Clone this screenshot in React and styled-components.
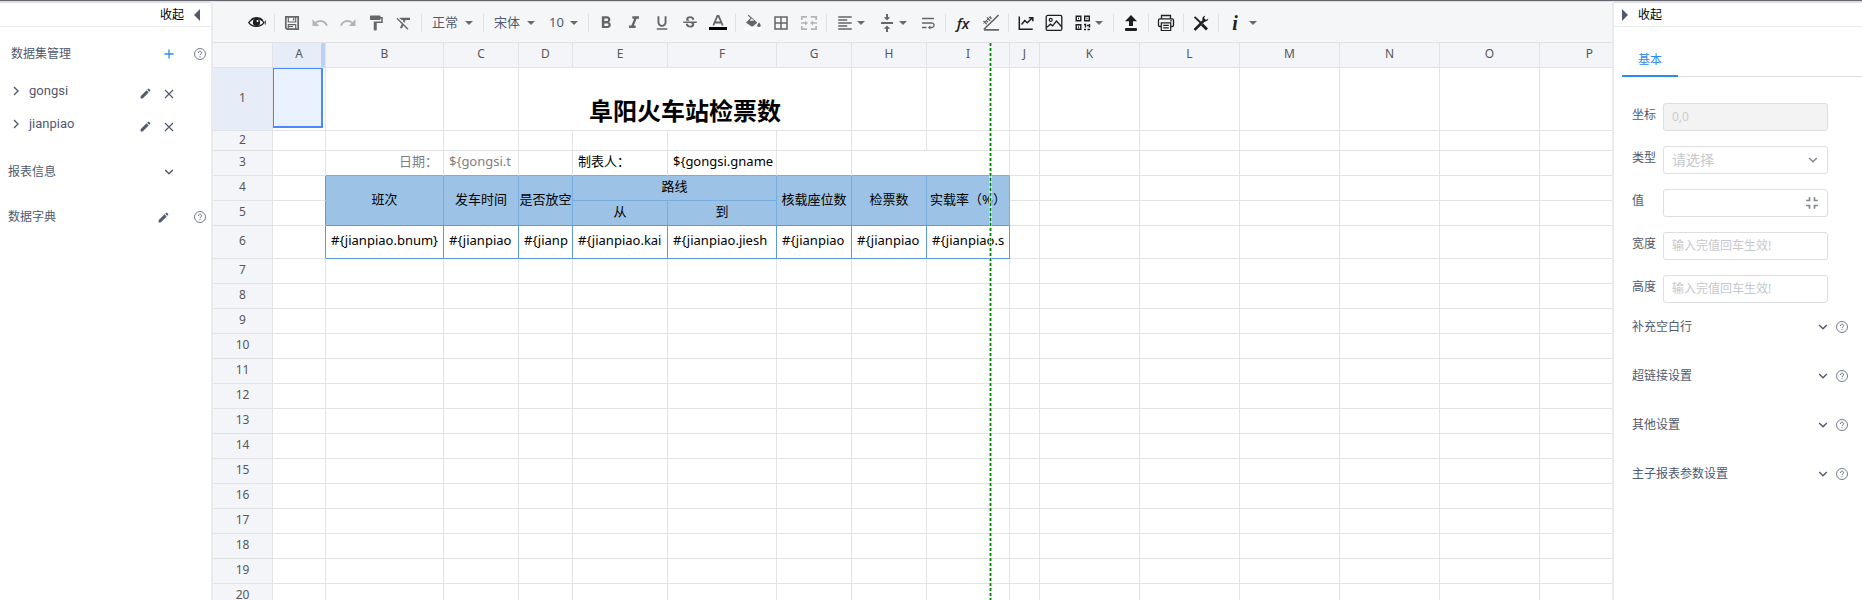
import React from 'react'
import styled, { createGlobalStyle, css } from 'styled-components'
import {
  MdUndo,
  MdRedo,
  MdFormatPaint,
  MdFormatClear,
  MdFormatBold,
  MdFormatItalic,
  MdFormatUnderlined,
  MdStrikethroughS,
  MdFormatAlignLeft,
  MdWrapText,
  MdBorderAll,
  MdEdit,
  MdFullscreenExit
} from 'react-icons/md'

const GlobalStyle = createGlobalStyle`
  * {
    box-sizing: border-box;
  }

  body {
    margin: 0;
    background: #fff;
    color: #515a6e;
    font: 12px/18px "Noto Sans", "Noto Sans CJK SC", sans-serif;
  }

  button,
  input,
  select {
    font: inherit;
    color: inherit;
  }
`

const Page = styled.div`
  display: flex;
  height: 100vh;
  overflow: hidden;
  border-top: 1px solid #66656b;
`

const PlainButton = styled.button`
  display: flex;
  align-items: center;
  justify-content: center;
  padding: 0;
  border: 0;
  background: none;
  cursor: pointer;
`

/* ---------- icons ---------- */

const Svg = ({size = 18, box = 18, children, ...rest}) => (
  <svg
    width={size}
    height={size}
    viewBox={`0 0 ${box} ${box}`}
    fill='none'
    stroke='currentColor'
    aria-hidden='true'
    {...rest}
  >
    {children}
  </svg>
)

const ChevronIcon = (props) => (
  <Svg size={10} box={10} strokeWidth='1.4' {...props}>
    <path d='M1.2 3 5 6.8 8.8 3' />
  </Svg>
)

const ChevronRightIcon = () => (
  <Svg size={10} box={10} strokeWidth='1.4'>
    <path d='M3 1 7 5 3 9' />
  </Svg>
)

const CrossIcon = () => (
  <Svg size={10} box={10} strokeWidth='1.2'>
    <path d='M1 1l8 8M9 1 1 9' />
  </Svg>
)

const PlusIcon = () => (
  <Svg size={10} box={10} strokeWidth='1.3'>
    <path d='M5 .5v9M.5 5h9' />
  </Svg>
)

const HelpIcon = () => (
  <Svg size={12} box={12} strokeWidth='.8'>
    <circle cx='6' cy='6' r='5.5' />
    <path d='M4.4 4.9C4.4 2.7 7.6 2.800 7.600 4.700 7.600 5.900 6 5.900 6 7.200M6 8.200v1' strokeWidth='.9' />
  </Svg>
)

const EyeIcon = () => (
  <Svg>
    <path d='M.8 8.600C4 3.400 12.500 3 16 8.600 12.500 13.400 4.500 13.600.8 8.600Z' strokeWidth='1.3' />
    <path d='M3 5.700C6 3 12 3 14.500 6' strokeWidth='1.4' />
    <circle cx='8.5' cy='8.4' r='3.6' fill='currentColor' stroke='none' />
    <circle cx='9.5' cy='7' r='1' fill='#fff' stroke='none' />
    <path d='M17.300 6.500v4' strokeWidth='.9' />
  </Svg>
)

const SaveIcon = () => (
  <Svg>
    <path d='M2.800 2.800h12.400v12.400H4.200l-1.400-1.400Z' strokeWidth='1.7' />
    <path d='M5.300 3v5h7.400V3M5.300 15v-4.300h7.400V15M10.600 4v2.500' strokeWidth='1.2' />
    <path d='M6 12.500h4' strokeWidth='1.2' />
  </Svg>
)

const TextColorIcon = () => (
  <Svg>
    <path d='M4.300 11.500 8.400 1.800h1.200l4.100 9.700M5.800 8.500h6.400' strokeWidth='1.8' />
    <path d='M0 14.500h18' stroke='#000' strokeWidth='3' />
  </Svg>
)

const FillColorIcon = () => (
  <Svg>
    <path d='M0 14.500h18' stroke='#fff' strokeWidth='3' />
    <path d='M4.500.8 12.800 8a.8.8 0 0 1 0 1.100L9 12.300c-.5.400-1.200.4-1.700 0L2.500 9a.8.8 0 0 1 0-1.100L6.600 4 3.700 1.500Z' fill='currentColor' stroke='none' />
    <path d='M5.600 6.800h4.600L7.700 4.600Z' fill='#f5f6f7' stroke='none' />
    <path d='M15 8.500s-1.700 1.900-1.700 2.900a1.700 1.700 0 0 0 3.400 0c0-1-1.700-2.900-1.700-2.900Z' fill='currentColor' stroke='none' />
  </Svg>
)

const MergeIcon = () => (
  <Svg>
    <path d='M1.800 6V2.800H7M10.800 2.800h5.400V6M1.800 12v3.200H7M10.800 15.200h5.400V12' strokeWidth='1.7' />
    <path d='M1 9h4.500M12.500 9H17' strokeWidth='1.6' />
    <path d='M5 6.500 8 9l-3 2.500ZM13 6.500 10 9l3 2.500Z' fill='currentColor' stroke='none' />
  </Svg>
)

const VerticalIcon = () => (
  <Svg>
    <path d='M3 9h12' strokeWidth='2' />
    <path d='M9 0v4M9 18v-4' strokeWidth='2' />
    <path d='M5.800 3.300h6.400L9 6.600ZM5.800 14.700h6.400L9 11.400Z' fill='currentColor' stroke='none' />
  </Svg>
)

const RulerIcon = () => (
  <Svg>
    <path d='M2 15.800h15M1.800 15.500 16.600 1' strokeWidth='1.7' />
    <path d='M1.500 9.500 8.700 2.300' strokeWidth='1' />
    <path d='m1.500 7 3.200 3.200M4 6.300l2 2M5 3.600l3.200 3.200M7.500 2.800l2 2' strokeWidth='1.4' />
  </Svg>
)

const ChartIcon = () => (
  <Svg>
    <path d='M2.300 2.500v12.700h13.400' strokeWidth='1.5' />
    <path d='m4.500 10.500 3.300-4 2.500 2.300 4.700-4.500M11.800 3.800h4v3.500' strokeWidth='1.5' />
  </Svg>
)

const ImageIcon = () => (
  <Svg>
    <rect x='1.2' y='1.4' width='15.6' height='15' rx='1.5' strokeWidth='1.3' />
    <circle cx='5.7' cy='5.9' r='1.5' strokeWidth='1.2' />
    <path d='m1.500 13.500 4-3.300 2 1.600 4-4.800 5.300 6' strokeWidth='1.3' />
  </Svg>
)

const QrIcon = () => (
  <Svg>
    <path d='M2.200 2.200h4.600v4.600H2.200ZM10.700 2.200h4.600v4.600h-4.600ZM2.200 10.700h4.600v4.600H2.200Z' strokeWidth='1.4' />
    <path d='M4 4.500h1M12.500 4.500h1M4 13h1M10 10.500h1.500v3M13 11.500h3.200M15.500 10v3.500M10 15.500h2M13.500 15.500h2.500' strokeWidth='1.4' />
  </Svg>
)

const UploadIcon = () => (
  <Svg>
    <path d='M9 1 15 7.200h-4V12H7V7.200H3Z' fill='currentColor' stroke='none' />
    <rect x='3' y='14' width='12' height='3' rx='1' fill='currentColor' stroke='none' />
  </Svg>
)

const PrintIcon = () => (
  <Svg>
    <path d='M4.500 4.800v-3.300h9v3.300M4 12.500H2.800a1.300 1.300 0 0 1-1.300-1.300v-5a1.300 1.300 0 0 1 1.300-1.300h12.400a1.300 1.300 0 0 1 1.300 1.300v5a1.300 1.300 0 0 1-1.300 1.300H14' strokeWidth='1.3' />
    <path d='M4.300 8.800h9.400v7.700H4.300ZM6.200 11.300h5.600M6.200 13.800h5.600M13.200 6.800h1.600' strokeWidth='1.2' />
  </Svg>
)

const ToolsIcon = () => (
  <Svg>
    <path d='M2.500 2.800 9 9' strokeWidth='1.8' />
    <path d='m10 10.500 5 5' strokeWidth='3' />
    <path d='M2.500 16 12.500 6' strokeWidth='2.5' />
    <path d='M13.300 1.800c-3 .5-3.500 3-2.300 5.200 2.300 1.200 5 .3 5.300-2.500L14 6l-2-2Z' fill='currentColor' stroke='none' />
  </Svg>
)

const Caret = styled.span`
  width: 0;
  height: 0;
  border: 4px solid transparent;
  border-top-color: #6a6a6a;
  border-bottom: 0;
`

/* ---------- side panels ---------- */

const Side = styled.aside`
  display: flex;
  flex-direction: column;
  flex: none;
  width: ${({$width}) => $width}px;
  border-top: 2px solid #dcdee8;
`

const SideHead = styled.button`
  display: flex;
  align-items: center;
  gap: 10px;
  flex: none;
  height: 24px;
  padding: 0 11px 0 8px;
  border: 0;
  border-bottom: 1px solid #e8eaec;
  background: #fff;
  color: #000;
  justify-content: ${({$end}) => ($end ? 'flex-end' : 'flex-start')};
`

const Triangle = styled.span`
  width: 0;
  height: 0;
  border: 6px solid transparent;
  border-${({$to}) => ($to === 'left' ? 'right' : 'left')}-color: #515a6e;
  border-${({$to}) => $to}: 0;
`

const DataPanel = styled.div`
  display: flex;
  flex-direction: column;
  padding: 14px 5px 0 8px;
`

const DataRow = styled.div`
  display: grid;
  grid-template-columns: 1fr 24px 24px 25px;
  align-items: center;
  height: ${({$height}) => $height}px;
  padding-left: ${({$indent}) => $indent || 0}px;
`

const DataSets = styled.div`
  padding: 7px 0 1px;
`

const DataName = styled.button`
  display: flex;
  align-items: center;
  gap: 8px;
  padding: 0;
  border: 0;
  background: none;
  font: 13px/18px Roboto, sans-serif;
`

const IconButton = styled(PlainButton)`
  height: 18px;
  grid-column: ${({$column}) => $column || 'auto'};
  justify-content: ${({$align}) => $align || 'center'};
  color: ${({$color}) => $color || '#515a6e'};

  ${DataSets} & {
    height: 24px;
    padding-top: 6px;
  }
`

/* ---------- toolbar ---------- */

const Main = styled.main`
  flex: 1;
  min-width: 0;
  display: flex;
  flex-direction: column;
  overflow: hidden;
  border: solid #ebebed;
  border-width: 0 2px;
`

const Toolbar = styled.div`
  display: flex;
  align-items: center;
  flex: none;
  height: 42px;
  padding: 2px 0 0 30px;
  border-top: 1px solid #dcdee0;
  border-bottom: 1px solid #e0e2e4;
  background: #f5f6f7;
`

const Tool = styled(PlainButton)`
  flex: none;
  width: ${({$menu}) => ($menu ? 40 : 26)}px;
  height: 26px;
  margin: 0 1px;
  gap: ${({$wide}) => ($wide ? 11 : 3)}px;
  padding-right: ${({$menu, $wide}) => ($menu && !$wide ? 2 : 0)}px;
  padding-left: ${({$wide}) => ($wide ? 3 : 0)}px;
  color: ${({$dark}) => ($dark ? '#1f1f1f' : '#666')};
  opacity: ${({disabled}) => (disabled ? 0.45 : 1)};
`

const Divider = styled.span`
  flex: none;
  width: 1px;
  height: 18px;
  margin: 0 3px;
  background: #dfe0e2;
`

const Picker = styled.label`
  display: grid;
  align-items: center;
  flex: none;
  width: ${({$width}) => $width}px;

  > * {
    grid-area: 1 / 1;
  }

  ${Caret} {
    justify-self: end;
    margin-right: 7px;
    pointer-events: none;
  }
`

const PickerSelect = styled.select`
  width: 100%;
  height: 26px;
  padding: 0 0 2px 7px;
  border: 0;
  appearance: none;
  background: none;
  color: #515a6e;
  font-size: 13px;
`

const Formula = styled.em`
  font: italic 600 15px/18px "Open Sans", sans-serif;
`

const Info = styled.em`
  font: italic bold 20px/20px "Liberation Serif", serif;
`

/* ---------- sheet ---------- */

const SheetArea = styled.div`
  position: relative;
  flex: 1;
  overflow: hidden;
`

const Sheet = styled.table`
  table-layout: fixed;
  border-collapse: separate;
  border-spacing: 0;
  color: #000;
  font-size: 13px;
  line-height: 18px;
`

const lines = css`
  border-right: 1px solid ${({$right}) => $right || '#e2e3e5'};
  border-bottom: 1px solid ${({$bottom}) => $bottom || '#e2e3e5'};
`

const Head = styled.th`
  ${lines}
  padding: 0 0 2px;
  background: ${({$active}) => ($active ? '#e6ecf8' : '#f4f5f9')};
  color: #585757;
  font-size: 12px;
  line-height: 16px;
  font-weight: 400;
`

const ColumnHead = styled(Head)`
  box-shadow: ${({$active}) => ($active ? 'inset -4px 0 #bdd0f8' : 'none')};
`

const Cell = styled.td`
  ${lines}
  padding: 0 ${({$tight}) => ($tight ? 0 : 5)}px 4px;
  overflow: hidden;
  white-space: nowrap;
  text-align: ${({$align}) => $align || 'left'};
  background: ${({$fill}) => $fill || '#fff'};
  color: ${({$color}) => $color || '#000'};
`

// the selection frame stops short of the cell's right and bottom lines
const SelectedCell = styled(Cell)`
  padding: 0 2px 2px 0;
`

const Selection = styled.div`
  height: 60px;
  border: solid #4b89ff;
  border-width: 1px 2px 2px 1px;
  background: #ebf2ff;
`

const TitleCell = styled(Cell)`
  padding: 24px 0 0;
  text-align: center;
  font-size: 24px;
  line-height: 36px;
  font-weight: 700;
`

const PageBreak = styled.div`
  position: absolute;
  top: 0;
  bottom: 0;
  left: 776px;
  width: 3px;
  background:
    linear-gradient(90deg, #fff9 1px, #fff0 1px 2px, #fff9 2px),
    repeating-linear-gradient(#008000 0 3px, #fff0 3px 5px);
`

/* ---------- property form ---------- */

const Tabs = styled.div`
  display: flex;
  flex: none;
  height: 50px;
  margin: 0 0 26px 8px;
  border-bottom: 1px solid #dcdee2;
`

const Tab = styled.button`
  width: 56px;
  height: 50px;
  padding: 18px 0 0;
  border: 0;
  border-bottom: 2px solid #2d8cf0;
  background: none;
  color: #2d8cf0;
`

const Field = styled.div`
  display: flex;
  flex: none;
  height: 28px;
  margin: 0 34px 15px 18px;
`

const FieldLabel = styled.label`
  width: 31px;
  padding-top: 3px;
`

const control = css`
  flex: 1;
  min-width: 0;
  height: 28px;
  padding: 0 8px 1px;
  border: 1px solid #dcdee2;
  border-radius: 3px;
  background: #fff;
`

const Input = styled.input`
  ${control}

  &::placeholder {
    color: #c5c8ce;
  }

  &:disabled {
    background: #f3f3f3;
    color: #ccc;
  }
`

const FieldBox = styled.div`
  display: grid;
  flex: 1;
  align-items: center;

  > * {
    grid-area: 1 / 1;
  }

  > svg {
    justify-self: end;
    margin-right: ${({$inset}) => $inset}px;
    color: #808695;
    pointer-events: none;
  }
`

const Select = styled.select`
  ${control}
  width: 100%;
  appearance: none;
  color: #c5c8ce;
  font-size: 14px;
`

const Section = styled.div`
  display: grid;
  grid-template-columns: 1fr 18px 20px;
  align-items: center;
  flex: none;
  height: 49px;
  margin: 0 10px 0 18px;
`

const Sections = styled.div`
  display: flex;
  flex-direction: column;
  margin-top: -16px;
`

const columns = [
  ['A', 53], ['B', 118], ['C', 75], ['D', 54], ['E', 95], ['F', 109], ['G', 75], ['H', 75],
  ['I', 83], ['J', 30], ['K', 100], ['L', 100], ['M', 100], ['N', 100], ['O', 100], ['P', 100]
]

const HEAD_WIDTH = 60
const sheetWidth = columns.reduce((sum, [, width]) => sum + width, HEAD_WIDTH)

const rowHeights = [63, 20, 25, 25, 25, 33, ...Array(15).fill(25)]

const BLUE = '#5b9bd5'
const INNER = '#77ade0'
const FILL = '#9cc2e6'

const header = (text, more) => ({
  text, align: 'center', fill: FILL, right: INNER, bottom: BLUE, tight: true, ...more
})
const bound = (text) => ({text, right: BLUE, bottom: BLUE})
const edge = {right: BLUE}

// keyed by column letter + row number, `null` is covered by a merged cell
const cells = {
  A4: edge,
  A5: edge,
  A6: edge,
  D1: {title: true, text: '阜阳火车站检票数', colSpan: 4},
  E1: null,
  F1: null,
  G1: null,
  B3: {text: '日期：', align: 'right', color: '#7f7f7f', bottom: INNER},
  C3: {text: '${gongsi.t', color: '#7f7f7f', bottom: INNER},
  D3: {bottom: INNER},
  E3: {text: '制表人：', bottom: INNER},
  F3: {text: '${gongsi.gname', bottom: INNER},
  G3: {bottom: INNER},
  H3: {bottom: INNER, colSpan: 2},
  I3: null,
  B4: header('班次', {rowSpan: 2}),
  C4: header('发车时间', {rowSpan: 2}),
  D4: header('是否放空', {rowSpan: 2}),
  E4: header('路线', {colSpan: 2, bottom: INNER}),
  F4: null,
  G4: header('核载座位数', {rowSpan: 2}),
  H4: header('检票数', {rowSpan: 2}),
  I4: header('实载率（%）', {rowSpan: 2}),
  B5: null,
  C5: null,
  D5: null,
  E5: header('从'),
  F5: header('到'),
  G5: null,
  H5: null,
  I5: null,
  B6: bound('#{jianpiao.bnum}'),
  C6: bound('#{jianpiao'),
  D6: bound('#{jianp'),
  E6: bound('#{jianpiao.kai'),
  F6: bound('#{jianpiao.jiesh'),
  G6: bound('#{jianpiao'),
  H6: bound('#{jianpiao'),
  I6: bound('#{jianpiao.s')
}

const SheetCell = ({id}) => {
  const cell = cells[id]
  if (cell === null) return null
  if (id === 'A1') return <SelectedCell><Selection /></SelectedCell>
  const {text, title, colSpan, rowSpan, align, fill, color, right, bottom, tight} = cell || {}
  const Box = title ? TitleCell : Cell
  return (
    <Box
      colSpan={colSpan}
      rowSpan={rowSpan}
      $align={align}
      $fill={fill}
      $color={color}
      $right={right}
      $bottom={bottom}
      $tight={tight}
    >
      {text}
    </Box>
  )
}

const Spreadsheet = () => (
  <SheetArea>
    <Sheet style={{width: sheetWidth}}>
      <colgroup>
        <col style={{width: HEAD_WIDTH}} />
        {columns.map(([name, width]) => <col key={name} style={{width}} />)}
      </colgroup>
      <thead>
        <tr style={{height: 25}}>
          <Head />
          {columns.map(([name]) => (
            <ColumnHead key={name} scope='col' $active={name === 'A'}>{name}</ColumnHead>
          ))}
        </tr>
      </thead>
      <tbody>
        {rowHeights.map((height, i) => (
          <tr key={i} style={{height}}>
            <Head scope='row' $active={i === 0}>{i + 1}</Head>
            {columns.map(([name]) => <SheetCell key={name} id={`${name}${i + 1}`} />)}
          </tr>
        ))}
      </tbody>
    </Sheet>
    <PageBreak />
  </SheetArea>
)

const FontPicker = ({label, value, width}) => (
  <Picker $width={width}>
    <PickerSelect aria-label={label} defaultValue={value}>
      <option>{value}</option>
    </PickerSelect>
    <Caret />
  </Picker>
)

const EditorToolbar = () => (
  <Toolbar role='toolbar'>
    <Tool $dark aria-label='预览'><EyeIcon /></Tool>
    <Divider />
    <Tool aria-label='保存'><SaveIcon /></Tool>
    <Tool aria-label='撤销' disabled><MdUndo size={18} /></Tool>
    <Tool aria-label='重做' disabled><MdRedo size={18} /></Tool>
    <Tool aria-label='格式刷'><MdFormatPaint size={18} /></Tool>
    <Tool aria-label='清除格式'><MdFormatClear size={18} /></Tool>
    <Divider />
    <FontPicker label='格式' value='正常' width={55} />
    <Divider />
    <FontPicker label='字体' value='宋体' width={55} />
    <FontPicker label='字号' value='10' width={43} />
    <Divider />
    <Tool aria-label='加粗'><MdFormatBold size={20} /></Tool>
    <Tool aria-label='斜体'><MdFormatItalic size={20} /></Tool>
    <Tool aria-label='下划线'><MdFormatUnderlined size={18} /></Tool>
    <Tool aria-label='删除线'><MdStrikethroughS size={18} /></Tool>
    <Tool aria-label='字体颜色'><TextColorIcon /></Tool>
    <Divider />
    <Tool aria-label='填充颜色'><FillColorIcon /></Tool>
    <Tool aria-label='边框'><MdBorderAll size={18} /></Tool>
    <Tool aria-label='合并单元格' disabled><MergeIcon /></Tool>
    <Divider />
    <Tool $menu aria-label='水平对齐'><MdFormatAlignLeft size={18} /><Caret /></Tool>
    <Tool $menu aria-label='垂直对齐'><VerticalIcon /><Caret /></Tool>
    <Tool aria-label='自动换行'><MdWrapText size={18} /></Tool>
    <Divider />
    <Tool $dark aria-label='函数'><Formula>fx</Formula></Tool>
    <Tool aria-label='斜线'><RulerIcon /></Tool>
    <Divider />
    <Tool $dark aria-label='图表'><ChartIcon /></Tool>
    <Tool $dark aria-label='图片'><ImageIcon /></Tool>
    <Tool $dark $menu aria-label='条码'><QrIcon /><Caret /></Tool>
    <Divider />
    <Tool $dark aria-label='导入'><UploadIcon /></Tool>
    <Divider />
    <Tool $dark aria-label='打印'><PrintIcon /></Tool>
    <Divider />
    <Tool $dark aria-label='工具'><ToolsIcon /></Tool>
    <Divider />
    <Tool $dark $menu $wide aria-label='信息'><Info>i</Info><Caret /></Tool>
  </Toolbar>
)

const DataSet = ({name}) => (
  <DataRow $height={33} $indent={3}>
    <DataName><ChevronRightIcon />{name}</DataName>
    <IconButton aria-label={`编辑 ${name}`}><MdEdit size={13} /></IconButton>
    <IconButton aria-label={`删除 ${name}`}><CrossIcon /></IconButton>
  </DataRow>
)

const LeftPanel = () => (
  <Side $width={211}>
    <SideHead $end>收起<Triangle $to='left' /></SideHead>
    <DataPanel>
      <DataRow $height={26} $indent={3}>
        数据集管理
        <IconButton $column={3} $color='#2d8cf0' aria-label='新增'><PlusIcon /></IconButton>
        <IconButton $column={4} $align='flex-end' aria-label='帮助'><HelpIcon /></IconButton>
      </DataRow>
      <DataSets>
        <DataSet name='gongsi' />
        <DataSet name='jianpiao' />
      </DataSets>
      <DataRow $height={62}>
        报表信息
        <IconButton $column={3} aria-label='展开'><ChevronIcon /></IconButton>
      </DataRow>
      <DataRow $height={28}>
        数据字典
        <IconButton $column={3} $align='flex-start' aria-label='编辑'><MdEdit size={13} /></IconButton>
        <IconButton $column={4} $align='flex-end' aria-label='帮助'><HelpIcon /></IconButton>
      </DataRow>
    </DataPanel>
  </Side>
)

const sections = ['补充空白行', '超链接设置', '其他设置', '主子报表参数设置']

const RightPanel = () => (
  <Side $width={248}>
    <SideHead><Triangle $to='right' />收起</SideHead>
    <Tabs role='tablist'>
      <Tab role='tab' aria-selected='true'>基本</Tab>
    </Tabs>
    <Field>
      <FieldLabel htmlFor='coord'>坐标</FieldLabel>
      <Input id='coord' defaultValue='0,0' disabled />
    </Field>
    <Field>
      <FieldLabel htmlFor='type'>类型</FieldLabel>
      <FieldBox $inset={10}>
        <Select id='type'><option>请选择</option></Select>
        <ChevronIcon />
      </FieldBox>
    </Field>
    <Field>
      <FieldLabel htmlFor='value'>值</FieldLabel>
      <FieldBox $inset={6}>
        <Input id='value' />
        <MdFullscreenExit size={20} />
      </FieldBox>
    </Field>
    <Field>
      <FieldLabel htmlFor='width'>宽度</FieldLabel>
      <Input id='width' placeholder='输入完值回车生效!' />
    </Field>
    <Field>
      <FieldLabel htmlFor='height'>高度</FieldLabel>
      <Input id='height' placeholder='输入完值回车生效!' />
    </Field>
    <Sections>
      {sections.map((name) => (
        <Section key={name}>
          {name}
          <IconButton aria-label={`展开 ${name}`}><ChevronIcon /></IconButton>
          <IconButton aria-label={`${name} 帮助`}><HelpIcon /></IconButton>
        </Section>
      ))}
    </Sections>
  </Side>
)

const App = () => (
  <>
    <GlobalStyle />
    <Page>
      <LeftPanel />
      <Main>
        <EditorToolbar />
        <Spreadsheet />
      </Main>
      <RightPanel />
    </Page>
  </>
)

export default App
